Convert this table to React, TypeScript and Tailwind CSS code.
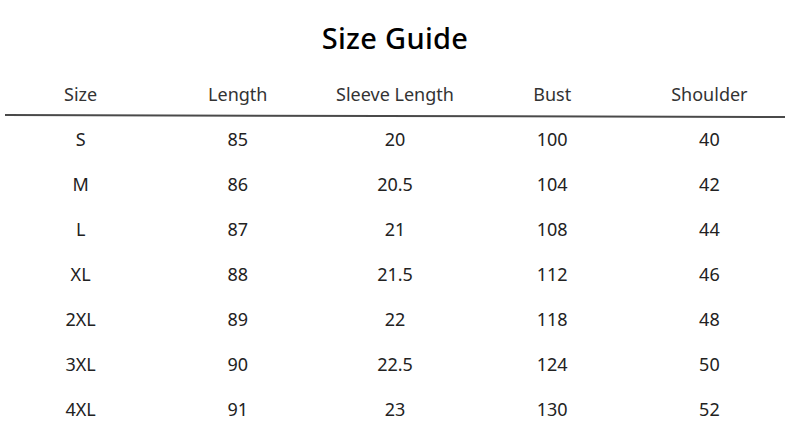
const columns = ['Size', 'Length', 'Sleeve Length', 'Bust', 'Shoulder']

const rows = [
  ['S', '85', '20', '100', '40'],
  ['M', '86', '20.5', '104', '42'],
  ['L', '87', '21', '108', '44'],
  ['XL', '88', '21.5', '112', '46'],
  ['2XL', '89', '22', '118', '48'],
  ['3XL', '90', '22.5', '124', '50'],
  ['4XL', '91', '23', '130', '52'],
]

export default function App() {
  return (
    <div
      className="w-[790px] h-[445px] bg-white text-[#222] overflow-hidden"
      style={{ fontFamily: '"Noto Sans", "Open Sans", sans-serif' }}
    >
      <div className="h-[76px] flex items-center justify-center">
        <h1 className="text-[29px] font-medium text-black tracking-[0.3px]">Size Guide</h1>
      </div>

      <div className="px-[2px]">
        <div className="grid grid-cols-5 h-[36px] items-center">
          {columns.map((c) => (
            <div key={c} className="text-center text-[18px] text-[#333]">
              {c}
            </div>
          ))}
        </div>

        <div className="mx-[3px] mt-[3px] h-[2px] bg-[#4a4a4a] rotate-[0.15deg]" />

        {rows.map((r) => (
          <div key={r[0]} className="grid grid-cols-5 h-[45px] items-center">
            {r.map((v, i) => (
              <div key={i} className="text-center text-[18px] text-[#222]">
                {v}
              </div>
            ))}
          </div>
        ))}
      </div>
    </div>
  )
}
